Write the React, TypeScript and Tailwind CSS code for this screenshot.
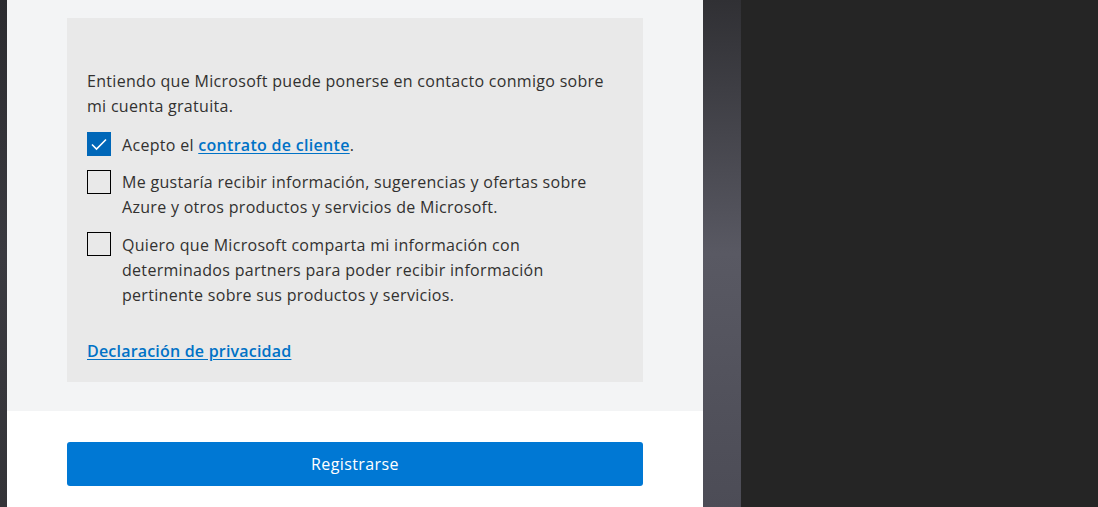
import React from 'react';

const font = { fontFamily: '"Open Sans", "Noto Sans", sans-serif' };

const Box = ({ checked }: { checked?: boolean }) =>
  checked ? (
    <span className="flex h-6 w-6 shrink-0 items-center justify-center bg-[#0067b8]">
      <svg width="24" height="24" viewBox="0 0 24 24" fill="none">
        <path d="M5 12.5l4.5 4.5L19 7.5" stroke="#fff" strokeWidth="1.6" />
      </svg>
    </span>
  ) : (
    <span className="block h-6 w-6 shrink-0 border border-black bg-transparent" />
  );

const Row = ({ checked, children }: { checked?: boolean; children: React.ReactNode }) => (
  <label className="flex items-start gap-[11px]">
    <Box checked={checked} />
    <span className="mt-[0.5px] text-base leading-[25px] tracking-[0.3px] text-[#323130]">{children}</span>
  </label>
);

export default function App() {
  return (
    <div className="flex h-[507px] w-[1098px] overflow-hidden bg-[#252525]" style={font}>
      {/* left edge of the dimmed page */}
      <div className="w-[7px] shrink-0 bg-gradient-to-b from-[#2b2b2f] via-[#3a3a40] to-[#343438]" />

      <div className="flex w-[696px] shrink-0 flex-col bg-white">
        <div className="h-[411px] bg-[#f3f4f5] px-[60px] pt-[18px]">
          <div className="h-[364px] bg-[#e9e9e9] px-5 pt-[51px]">
            <p className="text-base leading-[25px] tracking-[0.3px] text-[#323130]">
              Entiendo que Microsoft puede ponerse en contacto conmigo sobre
              <br />
              mi cuenta gratuita.
            </p>

            <div className="mt-[13px] flex flex-col">
              <Row checked>
                Acepto el{' '}
                <a href="#" className="font-semibold text-[#0072c6] underline underline-offset-2">
                  contrato de cliente
                </a>
                .
              </Row>
              <div className="mt-[12px]">
                <Row>
                  Me gustaría recibir información, sugerencias y ofertas sobre
                  <br />
                  Azure y otros productos y servicios de Microsoft.
                </Row>
              </div>
              <div className="mt-[12px]">
                <Row>
                  Quiero que Microsoft comparta mi información con
                  <br />
                  determinados partners para poder recibir información
                  <br />
                  pertinente sobre sus productos y servicios.
                </Row>
              </div>
            </div>

            <a
              href="#"
              className="mt-[31px] block text-base leading-[25px] tracking-[0.2px] font-semibold text-[#0072c6] underline underline-offset-2"
            >
              Declaración de privacidad
            </a>
          </div>
        </div>

        <div className="px-[60px] pt-[31px]">
          <button className="h-11 w-full rounded-[3px] bg-[#0078d4] text-base tracking-[0.4px] text-white">
            Registrarse
          </button>
        </div>
      </div>

      {/* shadow column */}
      <div className="w-[38px] shrink-0 bg-gradient-to-b from-[#303034] via-[#595963] to-[#4c4c56]" />
      <div className="flex-1 bg-[#252525]" />
    </div>
  );
}
